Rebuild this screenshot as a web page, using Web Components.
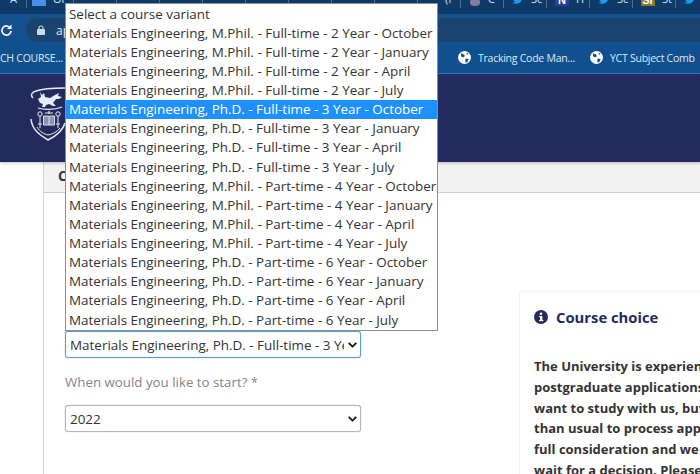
<!DOCTYPE html>
<html>
<head>
<meta charset="utf-8">
<title>Course application</title>
<style>
  html, body { margin: 0; padding: 0; }
  body { width: 700px; height: 474px; overflow: hidden; background: #fff; font-family: "Open Sans", "Noto Sans", sans-serif; }
</style>
</head>
<body>
<app-page></app-page>

<script>
// favicons in the tab strip, only their lower part shows in the window
const tabIcon = (color, glyph, glyphColor) => `
  <svg width="14" height="14" viewBox="0 0 14 14"><rect width="14" height="14" fill="${color}"/>${glyph ? `<text x="7" y="12" font-size="11" font-weight="700" font-family="Liberation Sans" text-anchor="middle" fill="${glyphColor || '#fff'}">${glyph}</text>` : ''}</svg>`;

const twitterIcon = `
  <svg width="12" height="14" viewBox="0 0 24 20"><path fill="#1d9bf0" d="M24 2.400c-.9.4-1.800.7-2.800.8 1-.6 1.800-1.600 2.200-2.700-1 .6-2 1-3.100 1.200C19.300.7 18 0 16.600 0c-2.700 0-4.900 2.200-4.900 4.900 0 .4 0 .8.100 1.100C7.700 5.800 4.100 3.900 1.700.9c-.4.700-.7 1.600-.7 2.500 0 1.700.9 3.200 2.200 4.100-.8 0-1.600-.2-2.200-.6v.1c0 2.400 1.700 4.400 3.900 4.800-.4.100-.8.200-1.300.2-.3 0-.6 0-.9-.1.600 2 2.400 3.400 4.600 3.400-1.700 1.300-3.800 2.100-6.100 2.100-.4 0-.8 0-1.200-.1 2.200 1.400 4.800 2.200 7.500 2.200 9.100 0 14-7.500 14-14v-.6c1-.7 1.800-1.600 2.500-2.100z"/></svg>`;

const crestIcon = `
  <svg width="12" height="14" viewBox="0 0 12 14"><path fill="#7d7f9c" d="M3 0h6v6l2 3v2c0 2-2 3-5 3s-5-1-5-3V9l2-3z"/></svg>`;

class BrowserTabs extends HTMLElement {
  constructor() {
    super();
    const blank = '<div class="tab w"></div>'.repeat(8);
    this.attachShadow({ mode: 'open' }).innerHTML = `
    <style>
      :host { display: flex; height: 14px; background: #0d3a66; color: #d7e3ef; font-size: 11px; overflow: hidden; }
      .tab { flex: none; display: flex; align-items: flex-end; gap: 7px; height: 8px; box-sizing: border-box; border-right: 1px solid #4a6c8e; white-space: nowrap; overflow: hidden; }
      .tab > * { flex: none; position: relative; top: -2px; }
      .a { width: 27px; padding-left: 10px; }
      .or { width: 47px; padding-left: 5px; }
      .w { width: 43px; padding-left: 8px; }
      .f { padding-left: 27px; }
    </style>
    <div class="tab a"><span>A</span></div>
    <div class="tab or">${tabIcon('#4a8fe7')}<span>Or</span></div>
    ${blank}
    <div class="tab w f"><span>(f</span></div>
    <div class="tab w">${crestIcon}<span>C</span></div>
    <div class="tab w">${twitterIcon}<span>Sc</span></div>
    <div class="tab w">${tabIcon('#2a3f9c', 'N')}<span>H</span></div>
    <div class="tab w">${twitterIcon}<span>Sc</span></div>
    <div class="tab w">${tabIcon('#8a7a2a', 'Sr')}<span>St</span></div>
    <div class="tab w">${twitterIcon}</div>
    `;
  }
}

class AddressBar extends HTMLElement {
  constructor() {
    super();
    this.attachShadow({ mode: 'open' }).innerHTML = `
    <style>
      :host { display: flex; align-items: flex-end; height: 28px; background: #14508e; color: #e6eef6; font-size: 12px; }
      svg { flex: none; }
      .reload { align-self: center; margin: 3px 0 0 1px; }
      .pill { flex: 1; display: flex; align-items: center; gap: 11px; height: 24px; margin-left: 14px; padding-left: 11px; border-radius: 12px 0 0 12px; background: #19426f; }
    </style>
    <svg class="reload" width="11" height="12" viewBox="0 0 12 12" fill="none" stroke="#fff" stroke-width="1.800"><path d="M10.300 4A5 5 0 1 0 11 7"/><path d="M11.500 0v5h-5z" fill="#fff" stroke="none"/></svg>
    <div class="pill">
      <svg width="8" height="10" viewBox="0 0 8 10"><rect y="4" width="8" height="6" rx="1" fill="#cdd8e3"/><path d="M2 4V3a2 2 0 0 1 4 0v1" fill="none" stroke="#cdd8e3" stroke-width="1.200"/></svg>
      <span>ap</span>
    </div>
    `;
  }
}

class BookmarkBar extends HTMLElement {
  constructor() {
    super();
    this.attachShadow({ mode: 'open' }).innerHTML = `
    <style>
      :host { display: flex; align-items: center; height: 32px; background: #11508f; border-bottom: 1px solid #3a78b8; box-sizing: border-box; color: #dfe9f3; font-size: 10.500px; letter-spacing: -.25px; white-space: nowrap; overflow: hidden; }
      .first { width: 458px; flex: none; }
      .mark { display: flex; align-items: center; gap: 7px; margin-right: 15px; }
    </style>
    <span class="first">CH COURSE...</span>
    <span class="mark"><slot name="globe"></slot>Tracking Code Man...</span>
    <span class="mark"><slot name="globe2"></slot>YCT Subject Comb</span>
    `;
  }
}

class SiteHeader extends HTMLElement {
  constructor() {
    super();
    this.attachShadow({ mode: 'open' }).innerHTML = `
    <style>
      :host { display: block; position: relative; height: 88px; padding: 12px 0 0 30px; box-sizing: border-box; background: #232b5e; box-shadow: 0 1px 3px rgba(0,0,0,.25); }
      svg { display: block; }
    </style>
    <svg width="36" height="56" viewBox="0 0 36 56" fill="none" stroke="#e8ebf3" stroke-width="1.300">
      <path d="M3 12 C0 9 2 6 6 5 C14 2 24 2 35 2" stroke-width="1.400"/>
      <path d="M10 6 l2 3 l2 -2 l1 4 l5 1 l5 -3 l4 -2 l-1 3 l4 1 l-3 2 l-3 0 l-3 4 l3 3 l-3 0 l-4 -2 l-3 1 l-1 2 l-3 0 l1 -3 l-3 -1 l-2 -4 l3 -2 z" fill="#e8ebf3" stroke="none"/>
      <path d="M8 22 C14 24 24 24 32 21" stroke-width="1.200"/>
      <circle cx="10" cy="28" r="2.200" stroke-width="1"/><circle cx="28" cy="28" r="2.200" stroke-width="1"/>
      <path d="M10 30 L10 42 M28 30 L28 42 M8 38 H12 M26 38 H30" stroke-width="1"/>
      <path d="M19 25 v3 M15 27 h8" stroke-width="1.200"/>
      <path d="M13.500 30 h5 l.5 1 .5-1 h5 v9 h-11 z M19 31 v8" fill="#8c93b5" stroke-width=".9"/>
      <path d="M1 33 C2 44 10 49 18 54 C26 50 33 44 35 37" stroke-width="1.500"/>
      <path d="M7 41 C10 46 14 48 18 49 C23 48 27 46 30 42" stroke-width="1"/>
    </svg>
    `;
  }
}

class CourseList extends HTMLElement {
  constructor() {
    super();
    const options = [
      'Select a course variant',
      'Materials Engineering, M.Phil. - Full-time - 2 Year - October',
      'Materials Engineering, M.Phil. - Full-time - 2 Year - January',
      'Materials Engineering, M.Phil. - Full-time - 2 Year - April',
      'Materials Engineering, M.Phil. - Full-time - 2 Year - July',
      'Materials Engineering, Ph.D. - Full-time - 3 Year - October',
      'Materials Engineering, Ph.D. - Full-time - 3 Year - January',
      'Materials Engineering, Ph.D. - Full-time - 3 Year - April',
      'Materials Engineering, Ph.D. - Full-time - 3 Year - July',
      'Materials Engineering, M.Phil. - Part-time - 4 Year - October',
      'Materials Engineering, M.Phil. - Part-time - 4 Year - January',
      'Materials Engineering, M.Phil. - Part-time - 4 Year - April',
      'Materials Engineering, M.Phil. - Part-time - 4 Year - July',
      'Materials Engineering, Ph.D. - Part-time - 6 Year - October',
      'Materials Engineering, Ph.D. - Part-time - 6 Year - January',
      'Materials Engineering, Ph.D. - Part-time - 6 Year - April',
      'Materials Engineering, Ph.D. - Part-time - 6 Year - July'
    ];
    this.attachShadow({ mode: 'open' }).innerHTML = `
    <style>
      :host { display: block; position: absolute; left: 65px; top: 3px; width: 373px; box-sizing: border-box; padding-top: .5px; background: #fff; border: 1px solid #8f8f8f; color: #333; font-size: 13.450px; }
      div { height: 19.130px; line-height: 19.130px; padding-left: 3px; white-space: nowrap; overflow: hidden; }
      .on { background: #1e90ff; color: #fff; }
    </style>
    ${options.map((o, i) => `<div class="${i === 5 ? 'on' : ''}">${o}</div>`).join('')}
    `;
  }
}

class FakeSelect extends HTMLElement {
  constructor() {
    super();
    this.attachShadow({ mode: 'open' }).innerHTML = `
    <style>
      :host { display: flex; align-items: center; width: 296px; height: 27px; box-sizing: border-box; padding: 0 3px 0 4px; background: #fff; border: 1px solid #b5b5b5; border-radius: 3px; box-shadow: 0 0 1px #999; color: #333; font-size: 13.450px; }
      :host([focused]) { border-color: #5b9bd0; box-shadow: 0 0 1px #5b9bd0; }
      .v { flex: 1; overflow: hidden; white-space: nowrap; }
      svg { flex: none; margin-left: 4px; }
    </style>
    <span class="v"><slot></slot></span>
    <svg width="9" height="6" viewBox="0 0 9 6" fill="none" stroke="#111" stroke-width="1.800"><path d="M.7.8l3.800 3.800L8.300.8"/></svg>
    `;
  }
}

class ApplyForm extends HTMLElement {
  constructor() {
    super();
    this.attachShadow({ mode: 'open' }).innerHTML = `
    <style>
      :host { display: flex; flex-direction: column; width: 475px; flex: none; box-sizing: border-box; padding: 138px 0 0 21px; }
      label { margin: 15px 0 13px; height: 19px; line-height: 19px; color: #858585; font-size: 13.300px; }
    </style>
    <slot name="variant"></slot>
    <label>When would you like to start? *</label>
    <slot name="year"></slot>
    `;
  }
}

class InfoPanel extends HTMLElement {
  constructor() {
    super();
    this.attachShadow({ mode: 'open' }).innerHTML = `
    <style>
      :host { display: block; flex: none; width: 300px; height: 300px; box-sizing: border-box; margin-top: 98px; padding: 14px 0 0 14px; background: #fff; border: 1px solid #f1f1f1; border-radius: 3px; }
      h2 { display: flex; align-items: center; gap: 8px; margin: 0 0 28px; color: #232b5e; font-size: 14.800px; font-weight: 700; line-height: 22px; }
      p { margin: 0; color: #333; font-size: 13px; font-weight: 700; line-height: 20.800px; white-space: nowrap; }
    </style>
    <h2><svg width="14" height="14" viewBox="0 0 14 14"><circle cx="7" cy="7" r="7" fill="#232b5e"/><rect x="6" y="6" width="2.400" height="5" fill="#fff"/><rect x="5" y="6" width="3" height="1.200" fill="#fff"/><rect x="5" y="10" width="4.400" height="1.200" fill="#fff"/><circle cx="7" cy="3.800" r="1.300" fill="#fff"/></svg>Course choice</h2>
    <p>The University is experiencing<br>postgraduate applications<br>want to study with us, but<br>than usual to process applications<br>full consideration and we<br>wait for a decision. Please</p>
    `;
  }
}

class CoursePanel extends HTMLElement {
  constructor() {
    super();
    this.attachShadow({ mode: 'open' }).innerHTML = `
    <style>
      :host { display: block; margin-left: 43px; border-left: 1px solid #d2d2d2; }
      .tab { height: 31px; box-sizing: border-box; padding: 3px 0 0 14px; background: #f2f2f2; border-bottom: 1px solid #cfcfcf; font-size: 14px; font-weight: 700; line-height: 22px; color: #333; }
      .body { display: flex; }
    </style>
    <div class="tab">C</div>
    <div class="body"><slot></slot></div>
    `;
  }
}

class AppPage extends HTMLElement {
  constructor() {
    super();
    const globe = `<svg slot="SLOT" width="13" height="13" viewBox="0 0 14 14"><circle cx="7" cy="7" r="7" fill="#fff"/><path d="M3 2.500l3 1 1.500 2-2 1.500-2-1zM8 8l3.500.5-1.500 3.500-2 .5zM9.500 1.500l2 2-2 .5z" fill="#11508f"/></svg>`;
    this.attachShadow({ mode: 'open' }).innerHTML = `
    <style>
      :host { display: block; position: relative; width: 700px; height: 474px; overflow: hidden; }
    </style>
    <browser-tabs></browser-tabs>
    <address-bar></address-bar>
    <bookmark-bar>${globe.replace('SLOT', 'globe')}${globe.replace('SLOT', 'globe2')}</bookmark-bar>
    <site-header></site-header>
    <course-panel>
      <apply-form>
        <fake-select slot="variant" focused>Materials Engineering, Ph.D. - Full-time - 3 Year - October</fake-select>
        <fake-select slot="year">2022</fake-select>
      </apply-form>
      <info-panel></info-panel>
    </course-panel>
    <course-list></course-list>
    `;
  }
}

customElements.define('browser-tabs', BrowserTabs);
customElements.define('address-bar', AddressBar);
customElements.define('bookmark-bar', BookmarkBar);
customElements.define('site-header', SiteHeader);
customElements.define('course-list', CourseList);
customElements.define('fake-select', FakeSelect);
customElements.define('apply-form', ApplyForm);
customElements.define('info-panel', InfoPanel);
customElements.define('course-panel', CoursePanel);
customElements.define('app-page', AppPage);
</script>
</body>
</html>
